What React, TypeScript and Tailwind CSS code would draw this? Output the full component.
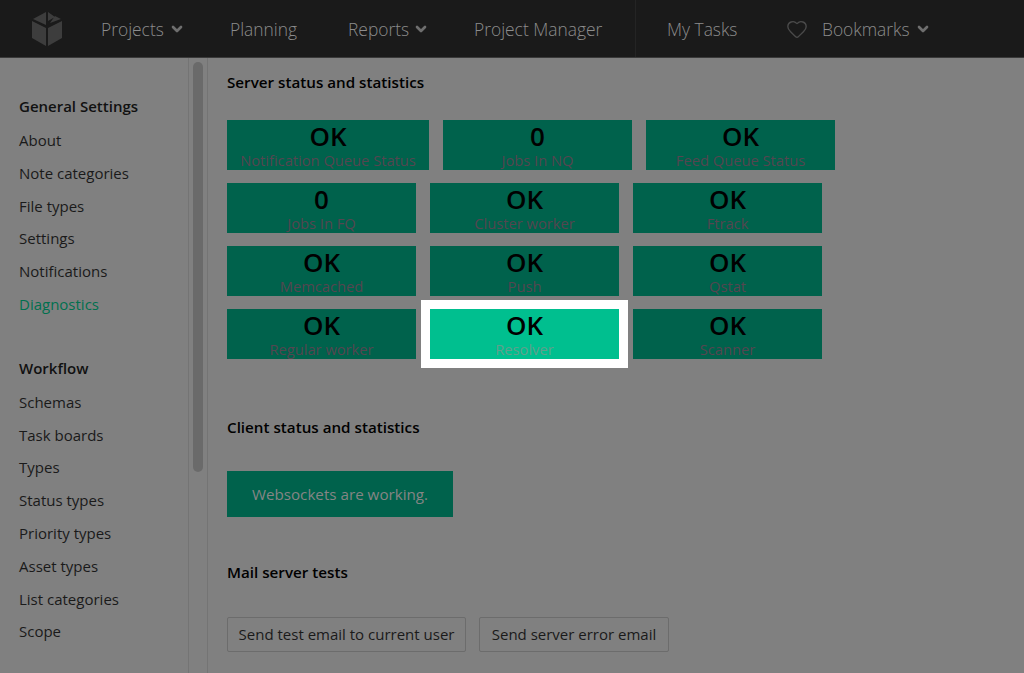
import { ChevronDown, Heart } from 'lucide-react';

const font = "font-['Open_Sans',sans-serif]";

const generalLinks = ['About', 'Note categories', 'File types', 'Settings', 'Notifications', 'Diagnostics'];
const workflowLinks = ['Schemas', 'Task boards', 'Types', 'Status types', 'Priority types', 'Asset types', 'List categories', 'Scope'];

const rows = [
  [
    { value: 'OK', label: 'Notification Queue Status' },
    { value: '0', label: 'Jobs In NQ' },
    { value: 'OK', label: 'Feed Queue Status' },
  ],
  [
    { value: '0', label: 'Jobs In FQ' },
    { value: 'OK', label: 'Cluster worker' },
    { value: 'OK', label: 'Ftrack' },
  ],
  [
    { value: 'OK', label: 'Memcached' },
    { value: 'OK', label: 'Push' },
    { value: 'OK', label: 'Qstat' },
  ],
  [
    { value: 'OK', label: 'Regular worker' },
    { value: 'OK', label: 'Resolver', active: true },
    { value: 'OK', label: 'Scanner' },
  ],
];

const Chevron = () => <ChevronDown className="w-[16px] h-[16px] text-[#6e6e6e]" strokeWidth={4} />;

const Logo = () => (
  <svg width="32" height="36" viewBox="0 0 32 36" className="shrink-0">
    <path d="M15 1 L2 8 L15 14 Z" fill="#3d3d3d" />
    <path d="M17 1 L17 10 L24 6 Z M19 12 L30 8 L24 5 Z" fill="#3d3d3d" />
    <path d="M1 10 L15 17 L15 35 L1 27 Z" fill="#3d3d3d" />
    <path d="M31 10 L17 17 L17 35 L31 27 Z" fill="#3d3d3d" />
  </svg>
);

const Tile = ({ value, label, active, wide }: { value: string; label: string; active?: boolean; wide?: boolean }) => (
  <div
    className={`h-[50px] pt-px flex flex-col items-center ${wide ? 'w-[202px]' : 'w-[189px]'} ${
      active ? 'bg-[#00bf8f] outline-[9px] outline-white relative' : 'bg-[#00624c]'
    }`}
  >
    <div className="text-[26px] leading-[30px] font-semibold text-black">{value}</div>
    <div className={`text-[14.7px] leading-[19px] whitespace-nowrap ${active ? 'text-[#5f9f8c]' : 'text-[#544650]'}`}>{label}</div>
  </div>
);

const SectionTitle = ({ children }: { children: string }) => (
  <h2 className="text-[15.2px] leading-[20px] font-semibold text-black">{children}</h2>
);

const App = () => {
  return (
    <div className={`${font} w-[1024px] h-[673px] overflow-hidden flex flex-col bg-[#808080]`}>
      <nav className="h-[58px] shrink-0 bg-[#1a1a1a] border-b border-[#3a3a3a] flex items-center text-[17.4px] font-light text-[#8c8c8c]">
        <div className="ml-[31px] w-[70px]">
          <Logo />
        </div>
        <div className="flex items-center gap-[5px] w-[129px] pt-px">
          Projects <Chevron />
        </div>
        <div className="w-[118px] pt-px">Planning</div>
        <div className="flex items-center gap-[4px] w-[126px] pt-px">
          Reports <Chevron />
        </div>
        <div className="w-[161px] pt-px">Project Manager</div>
        <div className="w-px h-full bg-[#242424] mr-[31px]" />
        <div className="w-[119px] pt-px">My Tasks</div>
        <Heart className="w-[22px] h-[22px] text-[#4a4a4a] mr-[14px]" strokeWidth={1.5} />
        <div className="flex items-center gap-[5px] pt-px">
          Bookmarks <Chevron />
        </div>
      </nav>

      <div className="flex flex-1 min-h-0">
        <aside className="w-[189px] shrink-0 border-r border-[#747474] pt-[36px] pl-[19px] text-[15px] text-[#1a1a1a]">
          <div className="font-semibold leading-[24px] text-[#111111] mb-[6px]">General Settings</div>
          {generalLinks.map((link) => (
            <div key={link} className={`h-[32.8px] leading-[32px] ${link === 'Diagnostics' ? 'text-[#00704f]' : ''}`}>
              {link}
            </div>
          ))}
          <div className="font-semibold leading-[24px] text-[#111111] mt-[35px] mb-[6px]">Workflow</div>
          {workflowLinks.map((link) => (
            <div key={link} className="h-[32.8px] leading-[32px]">
              {link}
            </div>
          ))}
        </aside>

        <div className="w-[19px] shrink-0 border-r border-[#747474] pl-[4px] pt-[4px]">
          <div className="w-[10px] h-[410px] rounded-[5px] bg-[#6a6a6a]" />
        </div>

        <main className="flex-1 pl-[19px] pt-[14px]">
          <SectionTitle>Server status and statistics</SectionTitle>
          <div className="mt-[28px] flex flex-col gap-[13px]">
            {rows.map((row, i) => (
              <div key={i} className="flex gap-[14px]">
                {row.map((tile, j) => (
                  <Tile key={tile.label} {...tile} wide={i === 0 && j === 0} />
                ))}
              </div>
            ))}
          </div>

          <div className="mt-[58px]">
            <SectionTitle>Client status and statistics</SectionTitle>
          </div>
          <div className="mt-[34px] w-[226px] h-[46px] bg-[#00624c] flex items-center justify-center text-[15.2px] text-[#858585]">
            Websockets are working.
          </div>

          <div className="mt-[45px]">
            <SectionTitle>Mail server tests</SectionTitle>
          </div>
          <div className="mt-[35px] flex gap-[13px]">
            <button className="h-[35px] w-[239px] border border-[#6c6c6c] rounded-[2px] text-[15px] text-[#1a1a1a]">
              Send test email to current user
            </button>
            <button className="h-[35px] w-[190px] border border-[#6c6c6c] rounded-[2px] text-[15px] text-[#1a1a1a]">
              Send server error email
            </button>
          </div>
        </main>
      </div>
    </div>
  );
};

export default App;
